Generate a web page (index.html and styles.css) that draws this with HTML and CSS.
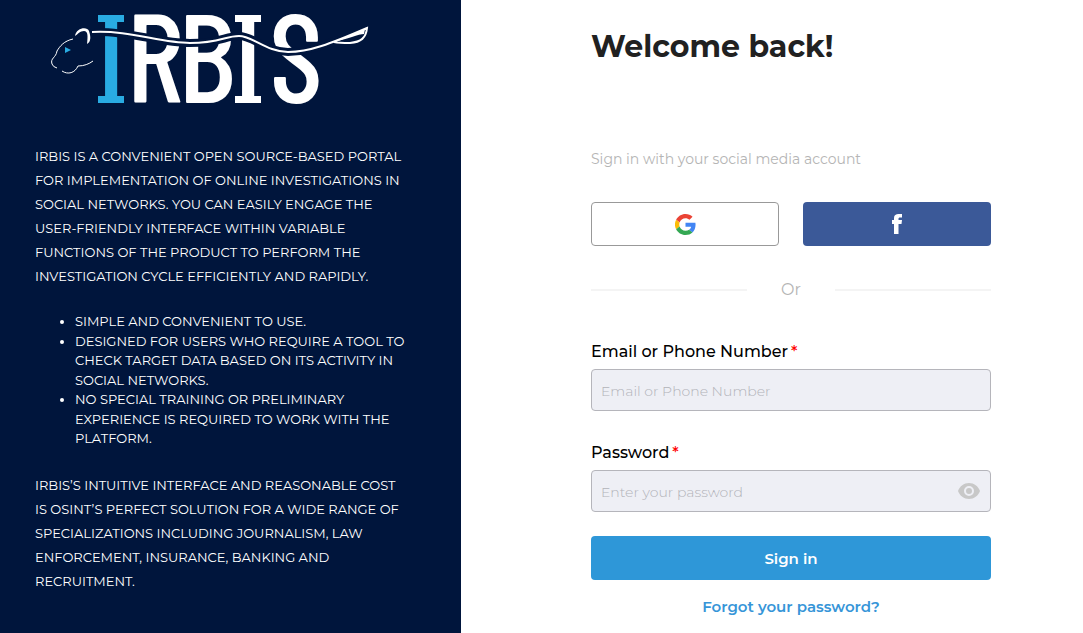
FILE: index.html
```html
<!DOCTYPE html>
<html lang="en">
<head>
<meta charset="utf-8">
<meta name="viewport" content="width=device-width, initial-scale=1">
<title>IRBIS – Sign in</title>
<link rel="stylesheet" href="styles.css">
</head>
<body>
<div class="page">
  <aside class="intro">
    <svg class="logo" viewBox="0 0 340 104" role="img" aria-label="IRBIS">
      <text class="wordmark" x="76 120 172 213 261" y="95"><tspan class="accent">I</tspan>RBIS</text>
      <path class="serif accent" d="M63 7h26v7H63zM63 88h26v7H63z"/>
      <path class="serif" d="M200 7h26v7h-26zM200 88h26v7h-26z"/>
      <path class="tail-gap" d="M60 24C95 23 125 35 155 35S190 28 204 28S232 44 253 44S290 36 304 31"/>
      <path class="tail" d="M57 24C95 22 125 35 155 35S190 28 204 28S232 44 253 44S295 36 332 20C331 30 326 34 315 35C309 35 304 35 299 34"/>
      <path class="tail-tip" d="M299 34C310 30 320 25 330 21L329 26C324 26 312 31 299 34Z"/>
      <path class="cat" d="M38 31C29 33 25 38 22 43C21 50 15 50 17 56Q18 59 22 60M27 63C33 67 40 65 43 58C49 58 54 56 58 53"/>
      <path class="cat-ear" d="M40 28C41 20 52 18 54 23C56 29 56 34 52 36C53 28 53 23 49 23C45 23 43 26 40 28Z"/>
      <path class="cat-eye" d="M30 39L36 42L30 45Z"/>
    </svg>
    <p class="copy">Irbis is a convenient open source-based portal for implementation of online investigations in social networks. You can easily engage the user-friendly interface within variable functions of the product to perform the investigation cycle efficiently and rapidly.</p>
    <ul class="features">
      <li>Simple and convenient to use.</li>
      <li>Designed for users who require a tool to check target data based on its activity in social networks.</li>
      <li>No special training or preliminary experience is required to work with the platform.</li>
    </ul>
    <p class="copy">Irbis’s intuitive interface and reasonable cost is OSINT’s perfect solution for a wide range of specializations including journalism, law enforcement, insurance, banking and recruitment.</p>
  </aside>
  <main class="signin">
    <form class="form">
      <h1 class="title">Welcome back!</h1>
      <p class="hint">Sign in with your social media account</p>
      <div class="social">
        <button class="social-button google" type="button" aria-label="Sign in with Google">
          <svg width="21" height="21" viewBox="0 0 48 48" aria-hidden="true">
            <path fill="#ea4335" d="M24 9.500c3.500 0 6.700 1.200 9.200 3.600l6.900-6.900C35.900 2.400 30.500 0 24 0 14.600 0 6.500 5.400 2.600 13.200l8 6.200C12.400 13.700 17.700 9.500 24 9.500z"/>
            <path fill="#4285f4" d="M47 24.500c0-1.600-.2-3.100-.4-4.500H24v9h12.900c-.6 3-2.200 5.500-4.800 7.200l7.700 6C44.400 38 47 31.800 47 24.500z"/>
            <path fill="#fbbc05" d="M10.500 28.600a14.500 14.500 0 0 1 0-9.200l-8-6.200a24 24 0 0 0 0 21.600z"/>
            <path fill="#34a853" d="M24 48c6.500 0 11.900-2.100 15.900-5.800l-7.700-6c-2.200 1.500-4.900 2.300-8.200 2.300-6.300 0-11.600-4.200-13.500-9.900l-8 6.200C6.500 42.600 14.600 48 24 48z"/>
          </svg>
        </button>
        <button class="social-button facebook" type="button" aria-label="Sign in with Facebook">
          <svg width="12" height="22" viewBox="0 0 12 22" aria-hidden="true">
            <path fill="#fff" d="M3 21V11H1V7H3V5C3 2 5 1 7.500 1H11V4.500H9C7.800 4.500 7.500 5 7.500 6V7H11L10.500 11H7.500V21Z"/>
          </svg>
        </button>
      </div>
      <div class="divider">Or</div>
      <div class="field">
        <label for="login">Email or Phone Number<span class="required">*</span></label>
        <input id="login" type="text" placeholder="Email or Phone Number" autocomplete="username">
      </div>
      <div class="field">
        <label for="password">Password<span class="required">*</span></label>
        <div class="password">
          <input id="password" type="password" placeholder="Enter your password" autocomplete="current-password">
          <button class="reveal" type="button" aria-label="Show password">
            <svg width="22" height="16" viewBox="0 0 22 16" aria-hidden="true">
              <path fill="#c8c8c8" fill-rule="evenodd" d="M11 0C6 0 1.800 3.200 0 8c1.800 4.800 6 8 11 8s9.200-3.200 11-8C20.200 3.200 16 0 11 0zm0 13a5 5 0 1 1 0-10 5 5 0 0 1 0 10zm0-2a3 3 0 1 0 0-6 3 3 0 0 0 0 6z"/>
            </svg>
          </button>
        </div>
      </div>
      <button class="submit" type="submit">Sign in</button>
      <a class="forgot" href="#">Forgot your password?</a>
    </form>
  </main>
</div>
</body>
</html>
```
FILE: styles.css
```css
* { box-sizing: border-box; }

body {
  margin: 0;
  background: #fff;
  color: #000;
  font-family: Montserrat, Inter, "Liberation Sans", sans-serif;
}

input, button { font-family: inherit; }

.page {
  display: grid;
  grid-template-columns: 461fr 622fr;
  min-height: 100vh;
}

.intro {
  padding: 8px 52px 36px 35px;
  background: #00153c;
  color: #fff;
  font-size: 13px;
  font-weight: 400;
  text-transform: uppercase;
}

.logo {
  display: block;
  width: 340px;
  max-width: 100%;
  margin-bottom: 32px;
}

.wordmark {
  fill: #fff;
  font-family: "Barlow Condensed", "Bebas Neue", sans-serif;
  font-size: 126px;
  font-weight: 500;
  text-anchor: middle;
}

.serif { fill: #fff; }
.wordmark .accent, .serif.accent { fill: #29abe2; }
.tail-gap { fill: none; stroke: #00153c; stroke-width: 8; }
.tail { fill: none; stroke: #fff; stroke-width: 2; }
.tail-tip { fill: #fff; }
.cat { fill: none; stroke: #fff; stroke-width: 1; }
.cat-ear { fill: #fff; }
.cat-eye { fill: #29abe2; }

.copy { margin: 0; line-height: 24px; }

.features {
  margin: 24px 0;
  padding-left: 40px;
  line-height: 1.5;
}

.signin { padding: 24px 24px 16px 130px; }

.form {
  display: flex;
  flex-direction: column;
  max-width: 400px;
}

.title {
  margin: 0;
  color: #212121;
  font-size: 30px;
  font-weight: 700;
  line-height: 46px;
}

.hint {
  margin: 78px 0 32px;
  color: #b5b5b5;
  font-size: 14px;
  font-weight: 400;
  line-height: 22px;
}

.social {
  display: grid;
  grid-template-columns: 1fr 1fr;
  gap: 24px;
}

.social-button {
  display: flex;
  align-items: center;
  justify-content: center;
  height: 44px;
  padding: 0;
  border-radius: 4px;
}

.google { border: 1px solid #999; background: #fff; }
.facebook { border: 0; background: #3b5998; }

.divider {
  display: flex;
  align-items: center;
  gap: 34px;
  margin: 32px 0 38px;
  color: #b5b5b5;
  font-size: 16px;
  line-height: 24px;
}

.divider::before, .divider::after {
  flex: 1;
  height: 2px;
  background: #f4f4f4;
  content: "";
}

.field { margin-bottom: 24px; }

.field label {
  display: block;
  margin-bottom: 5px;
  font-size: 16px;
  font-weight: 500;
  line-height: 24px;
}

.field + .field { padding-top: 6px; }
.required { margin-left: 3px; color: #f00; }

.field input {
  width: 100%;
  height: 42px;
  padding: 2px 9px 0;
  border: 1px solid #b5b5bb;
  border-radius: 4px;
  background: #eeeff5;
  font-size: 14px;
}

.field input::placeholder { color: #b2b3b9; font-weight: 300; }

.password { position: relative; }
.password input { padding-right: 44px; }

.reveal {
  position: absolute;
  top: 0;
  right: 0;
  display: flex;
  align-items: center;
  height: 42px;
  padding: 0 11px;
  border: 0;
  background: none;
}

.submit {
  height: 44px;
  border: 0;
  border-radius: 4px;
  background: #2e97d8;
  color: #fff;
  font-size: 15px;
  font-weight: 600;
}

.forgot {
  align-self: center;
  margin-top: 16px;
  color: #3695d8;
  font-size: 15px;
  font-weight: 600;
  line-height: 22px;
  text-decoration: none;
}
```
